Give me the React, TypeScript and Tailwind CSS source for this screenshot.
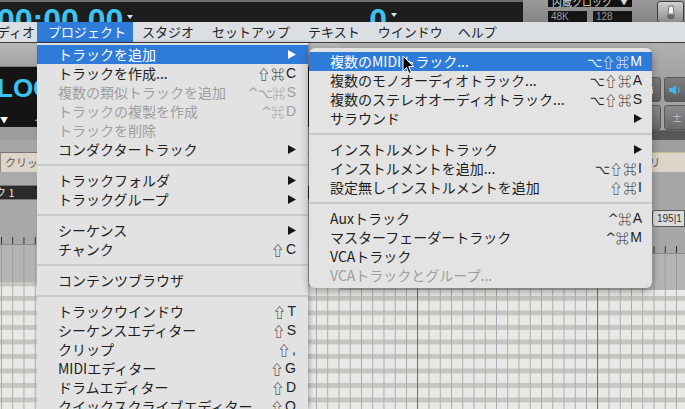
import React from "react";

type Item =
  | { label: string; sc?: string[]; arrow?: boolean; disabled?: boolean; active?: boolean }
  | "sep";

const mainItems: Item[] = [
  { label: "トラックを追加", arrow: true, active: true },
  { label: "トラックを作成...", sc: ["⇧", "⌘", "C"] },
  { label: "複数の類似トラックを追加", sc: ["^", "⌥", "⌘", "S"], disabled: true },
  { label: "トラックの複製を作成", sc: ["^", "⌘", "D"], disabled: true },
  { label: "トラックを削除", disabled: true },
  { label: "コンダクタートラック", arrow: true },
  "sep",
  { label: "トラックフォルダ", arrow: true },
  { label: "トラックグループ", arrow: true },
  "sep",
  { label: "シーケンス", arrow: true },
  { label: "チャンク", sc: ["⇧", "C"] },
  "sep",
  { label: "コンテンツブラウザ" },
  "sep",
  { label: "トラックウインドウ", sc: ["⇧", "T"] },
  { label: "シーケンスエディター", sc: ["⇧", "S"] },
  { label: "クリップ", sc: ["⇧", ","] },
  { label: "MIDIエディター", sc: ["⇧", "G"] },
  { label: "ドラムエディター", sc: ["⇧", "D"] },
  { label: "クイックスクライブエディター", sc: ["⇧", "Q"] },
];

const subItems: Item[] = [
  { label: "複数のMIDIトラック...", sc: ["⌥", "⇧", "⌘", "M"], active: true },
  { label: "複数のモノオーディオトラック...", sc: ["⌥", "⇧", "⌘", "A"] },
  { label: "複数のステレオオーディオトラック...", sc: ["⌥", "⇧", "⌘", "S"] },
  { label: "サラウンド", arrow: true },
  "sep",
  { label: "インストルメントトラック", arrow: true },
  { label: "インストルメントを追加...", sc: ["⌥", "⇧", "⌘", "I"] },
  { label: "設定無しインストルメントを追加", sc: ["⇧", "⌘", "I"] },
  "sep",
  { label: "Auxトラック", sc: ["^", "⌘", "A"] },
  { label: "マスターフェーダートラック", sc: ["^", "⌘", "M"] },
  { label: "VCAトラック" },
  { label: "VCAトラックとグループ...", disabled: true },
];

function Arrow({ white }: { white?: boolean }) {
  return (
    <svg width="8" height="9" viewBox="0 0 8 9" className="shrink-0">
      <path d="M0 0 L8 4.5 L0 9 Z" fill={white ? "#ffffff" : "#151515"} />
    </svg>
  );
}

function Shortcut({ keys }: { keys: string[] }) {
  return (
    <div className="flex items-center">
      {keys.map((k, i) =>
        k === "^" ? (
          <span key={i} className="w-[10px] text-center font-['DejaVu_Sans'] text-[13px]">
            ^
          </span>
        ) : "⌥⇧⌘".includes(k) ? (
          <span
            key={i}
            className="w-[14px] text-center font-['Noto_Sans_CJK_JP','DejaVu_Sans',sans-serif] text-[13px]"
          >
            {k}
          </span>
        ) : (
          <span key={i} className="pl-[1px] font-['Liberation_Sans'] text-[14px]">
            {k}
          </span>
        )
      )}
    </div>
  );
}

function Menu({ items, right }: { items: Item[]; right: string }) {
  return (
    <>
      {items.map((it, i) =>
        it === "sep" ? (
          <div key={i} className="my-[5px] h-[2px] bg-[#c9c9c9]" />
        ) : (
          <div
            key={i}
            className={
              "flex h-[19px] items-center justify-between pl-[21px] text-[14px] leading-[19px] " +
              right +
              (it.active
                ? " bg-[#2f7bd9] text-white"
                : it.disabled
                ? " text-[#9e9e9e]"
                : " text-[#1e1e1e]")
            }
          >
            <span className="whitespace-nowrap">{it.label}</span>
            {it.arrow ? <Arrow white={it.active} /> : it.sc ? <Shortcut keys={it.sc} /> : null}
          </div>
        )
      )}
    </>
  );
}

const lightGrid =
  "bg-[#e8e8e4] bg-fixed bg-[linear-gradient(to_right,#6f6f74_1px,transparent_1px),linear-gradient(to_right,#a9a9b6_1px,transparent_1px),linear-gradient(to_bottom,#c6c6c1_5px,transparent_5px)] bg-[size:180px_100%,11.25px_100%,100%_14.5px] bg-[position:57px_0,1px_0,0_6px]";
const greyGrid =
  "bg-[#b4b4b4] bg-fixed bg-[linear-gradient(to_right,#77777c_1px,transparent_1px),linear-gradient(to_right,#9a9aa2_1px,transparent_1px)] bg-[size:180px_100%,11.25px_100%] bg-[position:57px_0,1px_0]";
const ticks =
  "bg-fixed bg-[linear-gradient(to_right,#2a2a2a_1px,transparent_1px)] bg-[size:11.25px_100%] bg-[position:1px_0]";

function Caret() {
  return (
    <svg width="6" height="4" viewBox="0 0 6 4">
      <path d="M0 0 H6 L3 4 Z" fill="#cfe3f2" />
    </svg>
  );
}

export default function App() {
  return (
    <div className="relative h-[409px] w-[685px] overflow-hidden bg-[#a7a7a7] font-['Noto_Sans_CJK_JP',sans-serif]">
      {/* transport bar */}
      <div className="flex h-[22px] overflow-hidden">
        <div className="flex h-[22px] w-[523px] items-start overflow-hidden border-t-[2px] border-[#6d6d6d] bg-[#1d1d1d] pt-[2px] font-['Liberation_Sans'] text-[32px] font-bold leading-none text-[#3cc3ef]">
          <span className="-ml-[3px] block h-[18px] overflow-hidden">00:00.00</span>
          <span className="ml-[4px] mt-[11px]">
            <Caret />
          </span>
          <span className="ml-[236px] block h-[18px] overflow-hidden">0</span>
          <span className="ml-[4px] mt-[9px]">
            <Caret />
          </span>
        </div>
        <div className="flex flex-1 bg-[linear-gradient(to_bottom,#9a9a9a,#858585)] pl-[25px]">
          <div className="flex w-[84px] flex-col">
            <div className="-mt-[3px] flex h-[13px] items-center justify-between bg-[#111] px-[4px] text-[10px] leading-none text-[#d8d8d8]">
              <span>内蔵クロック</span>
              <span className="text-[8px]">▼</span>
            </div>
            <div className="mt-[4px] flex gap-[6px]">
              <div className="h-[12px] w-[39px] bg-[#151515] pl-[3px] font-['Liberation_Sans'] text-[10px] leading-[12px] text-[#9a9a9a]">
                48K
              </div>
              <div className="h-[12px] w-[39px] bg-[#151515] pl-[3px] font-['Liberation_Sans'] text-[10px] leading-[12px] text-[#9a9a9a]">
                128
              </div>
            </div>
          </div>
          <div className="ml-[25px] mt-[1px] flex h-[22px] w-[27px] items-start justify-center rounded-[3px] border border-[#3c3c3c] bg-[linear-gradient(to_bottom,#d0d0d0,#8c8c8c)] pt-[3px]">
            <svg width="12" height="16" viewBox="0 0 12 16">
              <path d="M4 1 H8 L9 9 H3 Z" fill="#f4f4f4" stroke="#333" strokeWidth="0.6" />
              <path d="M2 11 H10 M3 13 H9" stroke="#333" strokeWidth="1" />
            </svg>
          </div>
        </div>
      </div>

      {/* menu bar */}
      <div className="flex h-[21px] items-stretch border-b border-[#3a3a3a] bg-[#dbdee3] text-[13px] leading-[20px] text-[#222]">
        <div className="flex w-[37px] justify-end overflow-hidden pr-[2px]">
          <span className="whitespace-nowrap">オーディオ</span>
        </div>
        <div className="w-[96px] bg-[#2f7bd9] pl-[11px] text-white">プロジェクト</div>
        <span className="ml-[9px]">スタジオ</span>
        <span className="ml-[18px]">セットアップ</span>
        <span className="ml-[18px]">テキスト</span>
        <span className="ml-[18px]">ウインドウ</span>
        <span className="ml-[15px]">ヘルプ</span>
      </div>

      {/* workspace behind the menus */}
      <div className="flex h-[366px]">
        <div className="flex w-[340px] flex-col">
          <div className="h-[24px] border-b border-[#7a7a7a] bg-[linear-gradient(to_bottom,#b9b9b9,#a2a2a2)]" />
          <div className="flex h-[60px] flex-col bg-[#141414] pt-[8px]">
            <span className="-ml-[3px] font-['Liberation_Sans'] text-[26px] font-bold leading-none text-[#3cc3ef]">
              LOOP
            </span>
            <div className="mt-[14px] flex items-center text-[10px] leading-none text-[#bdbdbd]">
              <span className="text-[8px] text-white">▼</span>
              <span className="ml-[26px]">イン</span>
            </div>
          </div>
          <div className="h-[13px] bg-[#9c9c9c]" />
          <div className="h-[13px] border-b border-[#767676] bg-[#a6a6a6]" />
          <div className="flex h-[19px] bg-[#a6a6a6]">
            <div className="w-[60px] border-x border-[#8d8781] bg-[#ddd6c8] pl-[4px] text-[11px] leading-[18px] text-[#5a5a5a]">
              クリップ
            </div>
          </div>
          <div className="h-[13px] bg-[#aaaaaa]" />
          <div className="flex h-[15px] items-center border-y border-[#777] bg-[#2b2b2b] text-[11px] leading-none text-[#e0e0e0]">
            <span className="-ml-[5px]">ク 1</span>
          </div>
          <div className="flex h-[44px] flex-col justify-end bg-[#a8a8a8]">
            <div className={"h-[7px] " + ticks} />
          </div>
          <div className={"h-[38px] border-t border-[#8a8a8a] " + greyGrid} />
          <div className={"flex-1 " + lightGrid} />
        </div>

        <div className="flex flex-1 flex-col items-stretch">
          <div className="h-[34px] bg-[linear-gradient(to_bottom,#b0b0b0,#a3a3a3)]" />
          <div className="flex h-[25px] justify-end gap-[3px] bg-[#a3a3a3]">
            <div className="flex w-[18px] items-center justify-center rounded-[3px] border border-[#585858] bg-[linear-gradient(to_bottom,#7d7d7d,#5d5d5d)] text-[10px] text-white">
              ℹ
            </div>
            <div className="-mr-[6px] flex w-[27px] items-center rounded-[3px] border border-[#585858] bg-[linear-gradient(to_bottom,#7d7d7d,#5d5d5d)] pl-[4px]">
              <svg width="12" height="10" viewBox="0 0 12 10">
                <path d="M0 3 H3 L7 0 V10 L3 7 H0 Z" fill="#3cb7ef" />
                <path d="M9 2 Q11 5 9 8" stroke="#3cb7ef" fill="none" strokeWidth="1.2" />
              </svg>
            </div>
          </div>
          <div className="h-[3px] bg-[#a3a3a3]" />
          <div className="flex h-[25px] justify-end gap-[3px] bg-[#a3a3a3]">
            <div className="w-[18px] rounded-[3px] border border-[#585858] bg-[linear-gradient(to_bottom,#8a8a8a,#6a6a6a)]" />
            <div className="-mr-[6px] flex w-[27px] items-center rounded-[3px] border border-[#585858] bg-[linear-gradient(to_bottom,#8a8a8a,#6a6a6a)] pl-[7px] text-[10px] text-[#c8c8c8]">
              ±
            </div>
          </div>
          <div className="h-[10px] border-t border-[#666] bg-[#575757]" />
          <div className="h-[13px] border-b border-[#c9b89a] bg-[#9e9e9e]" />
          <div className="flex h-[19px] justify-end bg-[#a6a6a6]">
            <div className="w-[60px] border-l border-[#8d8781] bg-[#ddd6c8] pl-[2px] text-[11px] leading-[18px] text-[#5a5a5a]">
              ーブリ
            </div>
          </div>
          <div className="h-[38px] bg-[#a7a7a7]" />
          <div className="flex h-[17px] justify-end bg-[#a7a7a7]">
            <div className="w-[33px] rounded-l-[3px] border border-[#555] bg-[#dcdcdc] pl-[4px] font-['Liberation_Sans'] text-[10px] leading-[15px] text-[#333]">
              195|1
            </div>
          </div>
          <div className="flex h-[26px] flex-col justify-end bg-[#a7a7a7]">
            <div className={"h-[7px] " + ticks} />
          </div>
          <div className={"h-[37px] border-t border-[#8a8a8a] " + greyGrid} />
          <div className={"flex-1 " + lightGrid} />
        </div>
      </div>

      {/* main dropdown */}
      <div className="absolute bottom-0 left-[37px] top-[43px] w-[271px] bg-[#e2e2e2] pt-[2px] shadow-[2px_0_4px_rgba(0,0,0,0.25)]">
        <Menu items={mainItems} right="pr-[12px]" />
      </div>

      {/* submenu */}
      <div className="absolute left-[309px] top-[48px] w-[343px] rounded-[6px] bg-[#e3e3e3] pb-[3px] pt-[4px] shadow-[0_3px_8px_rgba(0,0,0,0.35)]">
        <Menu items={subItems} right="pr-[10px]" />
      </div>

      {/* mouse pointer */}
      <svg className="absolute left-[402px] top-[55px]" width="13" height="20" viewBox="0 0 13 20">
        <path
          d="M1 1 L1 16 L4.5 12.5 L7 18.5 L9.3 17.5 L6.8 11.6 L11.5 11.6 Z"
          fill="#000"
          stroke="#fff"
          strokeWidth="1"
          strokeLinejoin="round"
        />
      </svg>
    </div>
  );
}
